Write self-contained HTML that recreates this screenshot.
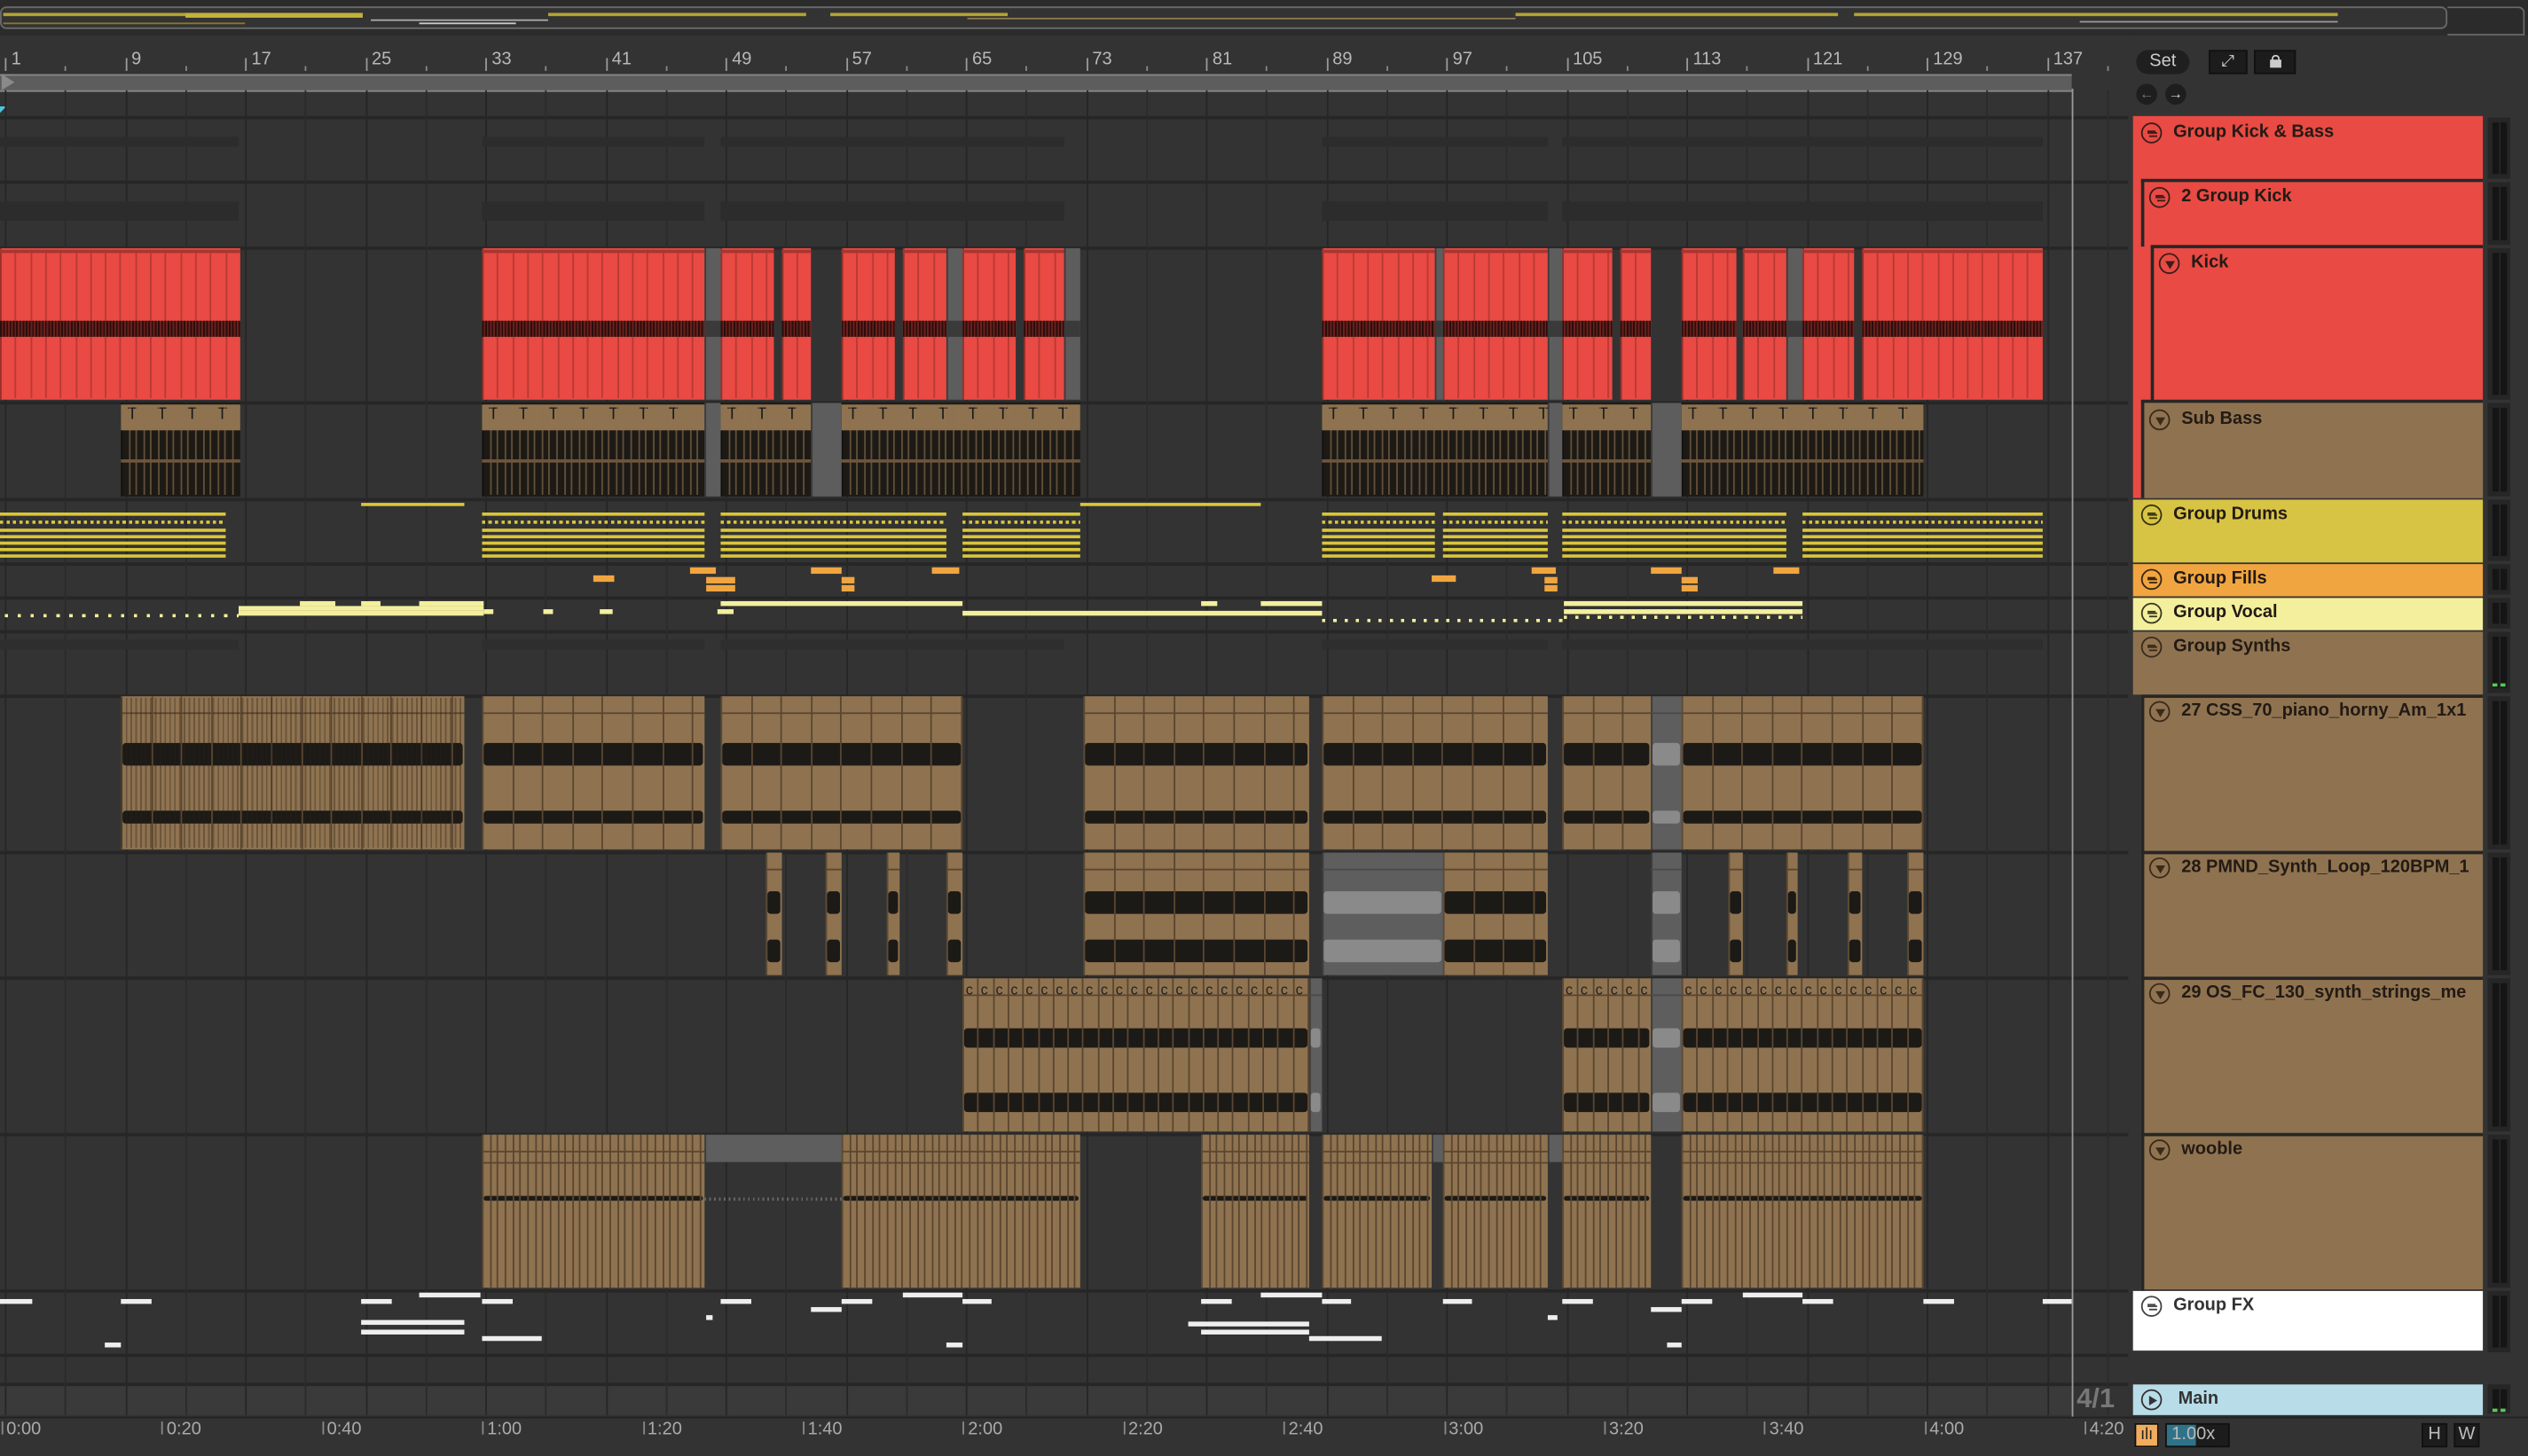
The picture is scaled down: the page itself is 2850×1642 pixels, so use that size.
<!DOCTYPE html>
<html><head><meta charset="utf-8">
<style>
html,body{margin:0;padding:0;background:#333;overflow:hidden;width:2850px;height:1642px}
#s{position:absolute;left:0;top:0;width:1568px;height:903.5px;transform:scale(1.81760);transform-origin:0 0;background:#333;font-family:"Liberation Sans",sans-serif;overflow:hidden}
.a{position:absolute}
.mt{position:absolute;left:1543px;width:14px;background:#262626}
.mt:before,.mt:after{content:"";position:absolute;top:3px;bottom:3px;width:4px;background:#151515}
.mt:before{left:3px}.mt:after{left:8px}
</style></head><body>
<div id="s">
<div class="a" style="left:0;top:0;width:1568px;height:22px;background:#2b2b2b"></div>
<div class="a" style="left:0;top:4px;width:1518px;height:14px;border:1.5px solid #6a6a6a;border-radius:4px;box-sizing:border-box;background:#333"></div>
<div class="a" style="left:1518px;top:4px;width:48px;height:18px;border:1.5px solid #6a6a6a;border-left:none;border-radius:0 4px 0 0;box-sizing:border-box"></div>
<div id="ov"></div>
<div class="a" style="left:0;top:22px;width:1320px;height:50px;background:#333"></div>
<div id="rul"></div>
<div class="a" style="left:0;top:46px;width:1285px;height:9px;background:#5d5d5d;border-top:1px solid #888;border-bottom:1px solid #888"></div>
<div class="a" style="left:1px;top:46px;width:0;height:0;border-top:5px solid transparent;border-bottom:5px solid transparent;border-left:8px solid #8a8a8a"></div>
<div class="a" style="left:0;top:66px;width:0;height:0;border-top:4px solid #4cc6e0;border-right:4px solid transparent"></div>
<div id="tr"></div>
<div class="a" style="left:1285px;top:55px;width:1px;height:825px;background:#9a9a9a"></div>
<div class="a" style="left:1325px;top:31px;width:33px;height:15px;background:#1f1f1f;border-radius:8px;color:#ccc;font-size:11px;text-align:center;line-height:15px">Set</div>
<div class="a" style="left:1370px;top:31px;width:24px;height:15px;background:#1c1c1c;border:1px solid #111;box-sizing:border-box;color:#ccc;font-size:10px;text-align:center;line-height:13px">⤢</div>
<div class="a" style="left:1398px;top:31px;width:26px;height:15px;background:#1c1c1c;border:1px solid #111;box-sizing:border-box"><div class="a" style="left:9px;top:5px;width:7px;height:5px;background:#ccc"></div><div class="a" style="left:10px;top:2px;width:3px;height:3px;border:1px solid #ccc;border-bottom:none;border-radius:3px 3px 0 0"></div></div>
<div class="a" style="left:1325px;top:52px;width:13px;height:13px;background:#1e1e1e;border-radius:50%;color:#777;font-size:9px;text-align:center;line-height:13px">←</div>
<div class="a" style="left:1343px;top:52px;width:13px;height:13px;background:#1e1e1e;border-radius:50%;color:#ddd;font-size:9px;text-align:center;line-height:13px">→</div>
<div id="hdr"></div>
<div class="a" style="left:0;top:879px;width:1568px;height:24px;background:#333;border-top:1px solid #222"></div>
<div id="tim"></div>
<div class="a" style="left:1288px;top:858px;width:32px;height:20px;color:#777;font-size:17px;font-weight:bold">4/1</div>
<div class="a" style="left:1324px;top:883px;width:15px;height:15px;background:#f0ad5e;border:1px solid #111;box-sizing:border-box;color:#222;font-size:10px;text-align:center;line-height:13px">ılı</div>
<div class="a" style="left:1343px;top:883px;width:40px;height:15px;background:#1c1c1c;border:1px solid #111;box-sizing:border-box"><div class="a" style="left:0;top:0;width:18px;height:13px;background:#2f7389"></div><div class="a" style="left:3px;top:0;font-size:11px;color:#bbb;line-height:13px">1.00x</div></div>
<div class="a" style="left:1502px;top:883px;width:16px;height:15px;background:#1c1c1c;border:1px solid #111;box-sizing:border-box;color:#bbb;font-size:11px;text-align:center;line-height:13px">H</div>
<div class="a" style="left:1522px;top:883px;width:16px;height:15px;background:#1c1c1c;border:1px solid #111;box-sizing:border-box;color:#bbb;font-size:11px;text-align:center;line-height:13px">W</div>
</div>
<script>
function D(p,x,y,w,h,st){var d=document.createElement('div');d.className='a';d.style.cssText='left:'+x+'px;top:'+y+'px;width:'+w+'px;height:'+h+'px;'+(st||'');document.getElementById(p).appendChild(d);return d;}
[[2,8,150,2,'#b5a333'],[2,14,150,1,'#8a7a2a'],[115,8,110,3,'#c4b03a'],[340,8,160,2,'#b5a333'],[515,8,110,2,'#b5a333'],[230,12,110,1,'#aaa'],[940,8,200,2,'#b5a333'],[1150,8,300,2,'#b5a333'],[1290,13,160,1,'#999'],[600,11,340,1,'#8c7a50'],[260,14,60,1,'#ccc']].forEach(function(a){D('ov',a[0],a[1],a[2],a[3],'background:'+a[4]);});
var bars=[1,9,17,25,33,41,49,57,65,73,81,89,97,105,113,121,129,137];
function bx(b){return 3+(b-1)/8*74.5;}
bars.forEach(function(b){var x=bx(b);D('rul',x,36,1,8,'background:#999');var t=D('rul',x+4,31,40,12,'font-size:11px;color:#b8b8b8');t.textContent=b;D('rul',x+37,41,1,3,'background:#888');});
var rows=[[72,112],[112,153],[153,249],[249,309],[309,349],[349,370],[370,391],[391,431],[431,528],[528,606],[606,703],[703,800],[800,840],[840,858],[858,878]];
rows.forEach(function(r){D('tr',0,r[0],1320,r[1]-r[0],'background:#333;border-top:2px solid #262626;box-sizing:border-box');});
D('tr',0,858,1285,20,'background:#3a3a3a;border-top:2px solid #262626;box-sizing:border-box');
for(var i=0;i<36;i++){var x=3+i*37.25;D('tr',x,56,1.2,822,'background:'+(i%2?'#2b2b2b':'#262626'));}
[[0,148],[299,437],[447,660],[820,960],[969,1267]].forEach(function(s){D('tr',s[0],85,s[1]-s[0],6,'background:#2c2c2c');D('tr',s[0],125,s[1]-s[0],12,'background:#2c2c2c');D('tr',s[0],397,s[1]-s[0],6,'background:#2e2e2e');});
function clip(x1,x2,y1,y2,col){return D('tr',x1,y1+1,x2-x1,y2-y1-2,'background:'+col+';border-left:1px solid rgba(0,0,0,.35);box-sizing:border-box;overflow:hidden');}
function vlines(x1,x2,y1,h,step,col){for(var x=x1+step;x<x2-1;x+=step)D('tr',x,y1,1,h,'background:'+col);}
var R='#e94a43';
[[0,149],[299,437],[447,480],[485,503],[522,555],[560,587],[597,630],[635,660],[820,890],[895,960],[969,1000],[1005,1024],[1043,1077],[1081,1108],[1118,1150],[1155,1267]].forEach(function(s){clip(s[0],s[1],153,249,R);vlines(s[0],s[1],155,92,9.3,'#b83a34');D('tr',s[0],199,s[1]-s[0],10,'background:repeating-linear-gradient(90deg,#2a0e0c 0 1px,#6a201c 1px 2px)');D('tr',s[0],155,s[1]-s[0],1.5,'background:#a83530');});
[[437,447],[587,597],[660,670],[960,969],[1108,1118],[890,895]].forEach(function(s){clip(s[0],s[1],153,249,'#5d5d5d');D('tr',s[0],199,s[1]-s[0],10,'background:#3a3a3a');});
var B='#8f7350';
[[75,149],[299,437],[447,503],[522,670],[820,960],[969,1024],[1043,1193]].forEach(function(s){clip(s[0],s[1],249,309,'#1d1a16');D('tr',s[0],251,s[1]-s[0],16,'background:'+B);for(var x=s[0]+4;x<s[1]-4;x+=18.6){var t=D('tr',x,252,8,12,'font-size:10px;color:#1a1a1a;line-height:12px');t.textContent='T';}vlines(s[0],s[1],251,56,4.6,'rgba(143,115,80,.6)');D('tr',s[0],285,s[1]-s[0],2,'background:#6d563c');});
[[503,522],[1024,1043],[437,447],[960,969]].forEach(function(s){clip(s[0],s[1],249,309,'#5d5d5d');});
var Y='#d9c63a';
[[0,140],[299,437],[447,587],[597,670],[820,890],[895,960],[969,1108],[1118,1267]].forEach(function(s){var w=s[1]-s[0];D('tr',s[0],318,w,2,'background:'+Y);D('tr',s[0],323,w,2,'background:repeating-linear-gradient(90deg,'+Y+' 0 2px,transparent 2px 4px)');[328,332,336,340,344].forEach(function(y){D('tr',s[0],y,w,1.5,'background:'+Y);});});
D('tr',224,312,64,2,'background:'+Y);D('tr',670,312,112,2,'background:'+Y);
var O='#f0a540';
[[368,381,357],[428,444,352],[438,456,358],[438,456,363],[503,522,352],[522,530,358],[522,530,363],[578,595,352],[888,903,357],[950,965,352],[958,966,358],[958,966,363],[1024,1043,352],[1043,1053,358],[1043,1053,363],[1100,1116,352]].forEach(function(a){D('tr',a[0],a[2],a[1]-a[0],4,'background:'+O);});
var V='#f3ef9c';
D('tr',3,381,145,2,'background:repeating-linear-gradient(90deg,'+V+' 0 2px,transparent 2px 8px)');
[[148,300,376],[148,300,379],[186,208,373],[224,236,373],[260,300,373],[447,597,373],[597,820,379],[745,755,373],[782,820,373],[970,1118,373],[970,1118,378],[300,306,378],[337,343,378],[372,380,378],[445,455,378]].forEach(function(a){D('tr',a[0],a[2],a[1]-a[0],2.5,'background:'+V);});
D('tr',820,384,150,2,'background:repeating-linear-gradient(90deg,'+V+' 0 2px,transparent 2px 7px)');
D('tr',970,382,148,2,'background:repeating-linear-gradient(90deg,'+V+' 0 2px,transparent 2px 7px)');
function aud(s,y1,y2,grey,waves,lines){var c=grey?'#5e5e5e':B;clip(s[0],s[1],y1,y2,c);var wc=grey?'#8a8a8a':'#1c1a17';D('tr',s[0],y1+11,s[1]-s[0],1,'background:'+(grey?'#4a4a4a':'#5a4630'));waves.forEach(function(w){D('tr',s[0]+1,w[0],s[1]-s[0]-2,w[1],'background:'+wc+';border-radius:2px');});if(lines)vlines(s[0],s[1],y1+1,y2-y1-2,lines,grey?'#4a4a4a':'#5a4630');}
[[75,288],[299,437],[447,597],[672,812],[820,960],[969,1024],[1043,1193]].forEach(function(s){aud(s,431,528,0,[[461,14],[503,8]],18.6);});
aud([1024,1043],431,528,1,[[461,14],[503,8]]);
D('tr',75,433,213,93,'background:repeating-linear-gradient(90deg,rgba(40,30,20,.35) 0 1px,transparent 1px 3px)');
[[475,485],[512,522],[550,558],[587,597],[672,812],[895,960],[1072,1081],[1108,1115],[1146,1155],[1183,1193]].forEach(function(s){aud(s,528,606,0,[[553,14],[583,14]],18.6);});
[[820,895],[1024,1043]].forEach(function(s){aud(s,528,606,1,[[553,14],[583,14]]);});
[[597,812],[969,1024],[1043,1193]].forEach(function(s){aud(s,606,703,0,[[638,12],[678,12]],9.3);for(var x=s[0]+2;x<s[1]-6;x+=9.3){var t=D('tr',x,609,7,10,'font-size:9px;color:#222;line-height:10px');t.textContent='c';}});
aud([812,820],606,703,1,[[638,12],[678,12]]);aud([1024,1043],606,703,1,[[638,12],[678,12]]);
[[299,437],[522,670],[745,812],[820,888],[895,960],[969,1024],[1043,1193]].forEach(function(s){aud(s,703,800,0,[[742,3]],4.65);D('tr',s[0],721,s[1]-s[0],1,'background:#5a4630');});
clip(437,522,703,722,'#5e5e5e');D('tr',437,743,85,2,'background:repeating-linear-gradient(90deg,#666 0 1px,transparent 1px 3px)');
[[888,895],[960,969]].forEach(function(s){clip(s[0],s[1],703,722,'#5e5e5e');});
[[0,20,806],[75,94,806],[224,243,806],[260,298,802],[299,318,806],[224,288,819],[224,288,825],[299,336,829],[65,75,833],[447,466,806],[503,522,811],[522,541,806],[560,597,802],[597,615,806],[587,597,833],[438,442,816],[745,764,806],[782,820,802],[820,838,806],[737,812,820],[745,812,825],[812,857,829],[895,913,806],[969,988,806],[960,966,816],[1024,1043,811],[1043,1062,806],[1081,1118,802],[1118,1137,806],[1193,1212,806],[1267,1285,806],[1034,1043,833]].forEach(function(a){D('tr',a[0],a[2],a[1]-a[0],3,'background:#eee');});
D('hdr',1320,56,248,847,'background:#333;z-index:-1');
function hb(x,y1,y2,col){D('hdr',x,y1,1540-x,y2-y1,'background:'+col);}
function sep(x,y){D('hdr',x,y-1,1540-x,2,'background:#262626');}
hb(1323,72,309,R);sep(1328,112);hb(1328,113,153,R);D('hdr',1328,112,1.5,41,'background:#262626');sep(1334,153);D('hdr',1334,153,1.5,96,'background:#262626');sep(1328,249);hb(1328,250,309,B);D('hdr',1328,249,1.5,60,'background:#262626');
hb(1323,310,349,'#d7c444');hb(1323,350,370,O);hb(1323,371,391,V);hb(1323,392,431,B);
hb(1328,432,528,B);hb(1328,529,606,B);hb(1328,607,703,B);hb(1328,704,800,B);
[431,528,606,703].forEach(function(y){D('hdr',1328,y+1,1.5,y==528?78:97,'background:#262626');sep(1328,y+1);});
hb(1323,801,838,'#ffffff');hb(1323,859,878,'#b8dde8');
function lab(x,y,t,col){var d=D('hdr',x,y,200,14,'font-size:11px;font-weight:bold;color:'+(col||'#231a14')+';line-height:14px;white-space:nowrap');d.textContent=t;}
function icon(x,y,type,col){col=col||'#3a1d1a';var c=D('hdr',x,y,13,13,'border:1.3px solid '+col+';border-radius:50%;box-sizing:border-box');
if(type=='g'){[[3,3.5,5],[2.5,5.3,6],[3.5,7.1,5]].forEach(function(l){var e=document.createElement('div');e.className='a';e.style.cssText='left:'+l[0]+'px;top:'+l[1]+'px;width:'+l[2]+'px;height:1.2px;background:'+col;c.appendChild(e);});}
else if(type=='t'){var e=document.createElement('div');e.className='a';e.style.cssText='left:2.5px;top:3.5px;width:0;height:0;border-left:3.5px solid transparent;border-right:3.5px solid transparent;border-top:5px solid '+col;c.appendChild(e);}
else{var e=document.createElement('div');e.className='a';e.style.cssText='left:4px;top:2.5px;width:0;height:0;border-top:3.5px solid transparent;border-bottom:3.5px solid transparent;border-left:5px solid '+col;c.appendChild(e);}}
icon(1328,76,'g');lab(1348,75,'Group Kick & Bass');
icon(1333,116,'g');lab(1353,115,'2 Group Kick');
icon(1339,157,'t');lab(1359,156,'Kick');
icon(1333,254,'t','#3a2a1a');lab(1353,253,'Sub Bass');
icon(1328,313,'g','#3a3410');lab(1348,312,'Group Drums');
icon(1328,353,'g','#3a2410');lab(1348,352,'Group Fills');
icon(1328,374,'g','#3a3a20');lab(1348,373,'Group Vocal');
icon(1328,395,'g','#3a2a1a');lab(1348,394,'Group Synths');
icon(1333,435,'t','#3a2a1a');lab(1353,434,'27 CSS_70_piano_horny_Am_1x1');
icon(1333,532,'t','#3a2a1a');lab(1353,531,'28 PMND_Synth_Loop_120BPM_1');
icon(1333,610,'t','#3a2a1a');lab(1353,609,'29 OS_FC_130_synth_strings_me');
icon(1333,707,'t','#3a2a1a');lab(1353,706,'wooble');
icon(1328,804,'g','#444');lab(1348,803,'Group FX','#333');
icon(1328,862,'p','#333');lab(1351,861,'Main','#333');
[[72,112],[112,153],[153,249],[249,309],[309,349],[349,370],[370,391],[391,431],[431,528],[528,606],[606,703],[703,800],[800,840],[858,878]].forEach(function(r){var m=D('hdr',1543,r[0]+1,14,r[1]-r[0]-2,'');m.className='a mt';});
D('hdr',1546,424,3,1.5,'background:#5c5');D('hdr',1551,424,3,1.5,'background:#5c5');D('hdr',1546,874,3,1.5,'background:#5c5');D('hdr',1551,874,3,1.5,'background:#5c5');
['0:00','0:20','0:40','1:00','1:20','1:40','2:00','2:20','2:40','3:00','3:20','3:40','4:00','4:20'].forEach(function(t,i){var x=i==13?1293:1+i*99.4;D('tim',x,882,1,8,'background:#888');var d=D('tim',x+3,881,40,14,'font-size:11px;color:#aaa');d.textContent=t;});
</script>
</body></html>
